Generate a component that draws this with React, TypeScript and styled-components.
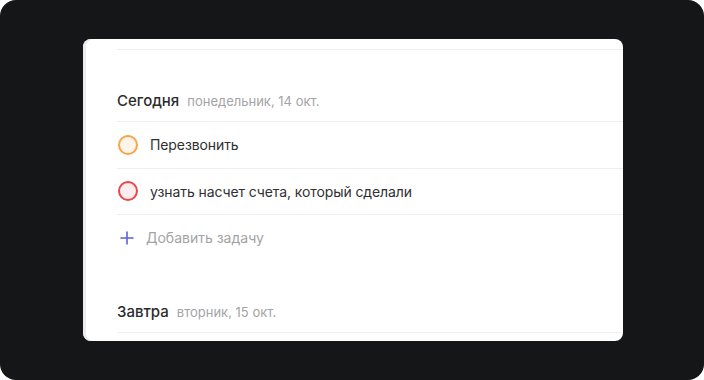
import React from "react";
import styled, { createGlobalStyle } from "styled-components";

const Global = createGlobalStyle`
  html, body { margin: 0; padding: 0; background: #ffffff; }
  body { font-family: Inter, "Noto Sans", sans-serif; -webkit-font-smoothing: antialiased; }
`;

const Stage = styled.div`
  width: 704px;
  height: 380px;
  box-sizing: border-box;
  background: #151618;
  border-radius: 16px;
  padding: 39px 81px 39px 83px;
  display: flex;
`;

const Card = styled.div`
  flex: 1;
  background: #ffffff;
  border-radius: 8px;
  overflow: hidden;
  box-shadow: inset 3px 0 0 #ebebf1;
  padding-left: 34px;
  padding-top: 10px;
  display: flex;
  flex-direction: column;
`;

const Rule = styled.div`
  height: 1px;
  background: #efeff0;
`;

const Section = styled.section`
  display: flex;
  flex-direction: column;
  margin-top: 41px;
`;

const Heading = styled.div`
  display: flex;
  align-items: baseline;
  gap: 8px;
  height: 20px;
  line-height: 20px;
  padding-bottom: 10px;
  border-bottom: 1px solid #efeff0;
`;

const Title = styled.span`
  font-size: 15px;
  font-weight: 500;
  color: #2b2b2d;
`;

const DateText = styled.span`
  font-size: 13px;
  color: #a3a3a6;
`;

const Row = styled.div<{ $last?: boolean }>`
  height: 45.5px;
  display: flex;
  align-items: center;
  border-bottom: ${(p) => (p.$last ? "none" : "1px solid #efeff0")};
`;

const Check = styled.span<{ $c: string; $bg: string }>`
  width: 16px;
  height: 16px;
  border-radius: 50%;
  border: 2px solid ${(p) => p.$c};
  background: ${(p) => p.$bg};
  margin-left: 1px;
  margin-right: 12px;
  flex: none;
`;

const TaskText = styled.span`
  font-size: 14px;
  color: #303033;
  letter-spacing: -0.1px;
`;

const AddText = styled.span`
  font-size: 14px;
  color: #a3a3a6;
`;

const PlusIcon = styled.svg`
  width: 14px;
  height: 14px;
  margin-left: 3px;
  margin-right: 12px;
  flex: none;
`;

export default function App() {
  return (
    <>
      <Global />
      <Stage>
        <Card>
          <Rule />
          <Section>
            <Heading>
              <Title>Сегодня</Title>
              <DateText>понедельник, 14 окт.</DateText>
            </Heading>
            <Row>
              <Check $c="#f7a545" $bg="#fff4ea" />
              <TaskText>Перезвонить</TaskText>
            </Row>
            <Row>
              <Check $c="#e5484d" $bg="#fdeced" />
              <TaskText>узнать насчет счета, который сделали</TaskText>
            </Row>
            <Row $last>
              <PlusIcon viewBox="0 0 14 14">
                <path d="M7 1v12M1 7h12" stroke="#5b5fe0" strokeWidth="1.6" strokeLinecap="round" />
              </PlusIcon>
              <AddText>Добавить задачу</AddText>
            </Row>
          </Section>
          <Section>
            <Heading>
              <Title>Завтра</Title>
              <DateText>вторник, 15 окт.</DateText>
            </Heading>
          </Section>
        </Card>
      </Stage>
    </>
  );
}
